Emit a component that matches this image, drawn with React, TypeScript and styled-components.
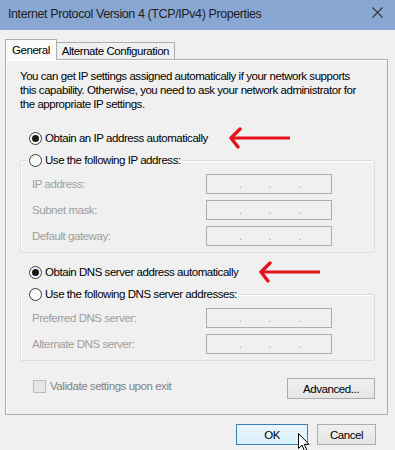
import React from 'react';
import styled, { createGlobalStyle } from 'styled-components';

const GlobalStyle = createGlobalStyle`
  html, body {
    margin: 0;
    padding: 0;
    background: #f0f0f0;
  }
  body {
    font-family: 'Liberation Sans', Arial, sans-serif;
  }
`;

const Window = styled.div`
  width: 395px;
  height: 450px;
  display: flex;
  flex-direction: column;
  background: #f0f0f0;
  overflow: hidden;
  font-family: 'Liberation Sans', Arial, sans-serif;
  font-size: 11.5px;
  letter-spacing: -0.45px;
  color: #000;
`;

const TitleBar = styled.div`
  height: 28px;
  flex-shrink: 0;
  display: flex;
  align-items: center;
  justify-content: space-between;
  padding: 0 6px 2px 8px;
  background: #89a7d3;
  font-size: 12.5px;
  letter-spacing: -0.4px;
  color: #1d1d1d;
`;

const CloseIcon = styled.svg`
  width: 11px;
  height: 11px;
  margin-right: 6px;
  margin-bottom: 4px;
`;

const Body = styled.div`
  display: flex;
  flex-direction: column;
  padding: 8px 7px 0 5px;
`;

const TabStrip = styled.div`
  display: flex;
  align-items: flex-end;
  height: 21px;
`;

const Tab = styled.div<{ $active?: boolean }>`
  height: ${(p) => (p.$active ? '21px' : '17px')};
  padding: 0 ${(p) => (p.$active ? '6px' : '5px')};
  display: flex;
  align-items: center;
  border: 1px solid #adadad;
  border-bottom: none;
  border-left: ${(p) => (p.$active ? '1px solid #adadad' : 'none')};
  background: ${(p) => (p.$active ? '#fbfbfb' : '#f0f0f0')};
  box-sizing: border-box;
  position: relative;
  top: ${(p) => (p.$active ? '1px' : '0')};
  z-index: ${(p) => (p.$active ? 1 : 0)};
`;

const Panel = styled.div`
  height: 356px;
  box-sizing: border-box;
  border: 1px solid #adadad;
  background: #f0f0f0;
  box-shadow: inset 1px 1px 0 #fff;
  padding: 9px 12px 0 14px;
  display: flex;
  flex-direction: column;
`;

const Intro = styled.p`
  margin: 0;
  line-height: 14px;
  white-space: nowrap;
`;

const RadioRow = styled.label<{ $top?: number; $left?: number }>`
  display: flex;
  align-items: center;
  height: 16px;
  margin: ${(p) => `${p.$top ?? 0}px 0 0 ${p.$left ?? 9}px`};
`;

const RadioCircle = styled.span<{ $checked?: boolean }>`
  width: 13px;
  height: 13px;
  box-sizing: border-box;
  border-radius: 50%;
  border: 1px solid #3c3c3c;
  background: linear-gradient(#f4f4f4, #fff);
  display: flex;
  align-items: center;
  justify-content: center;
  margin-right: 3px;
  flex-shrink: 0;

  &::after {
    content: '';
    width: 7px;
    height: 7px;
    border-radius: 50%;
    background: ${(p) => (p.$checked ? '#1a1a1a' : 'transparent')};
  }
`;

const Arrow = styled.svg`
  width: 64px;
  height: 22px;
  margin-left: 20px;
  flex-shrink: 0;
`;

const Group = styled.fieldset<{ $top: number }>`
  margin: ${(p) => `${p.$top}px 0 0 0`};
  padding: 0 0 6px 7px;
  border: 1px solid #dcdcdc;
  border-radius: 2px;
  box-shadow: 1px 1px 0 #fff inset;
  min-width: 0;
`;

const Legend = styled.legend`
  padding: 0 1px 0 1px;
  margin-left: 0;
`;

const FieldRow = styled.div`
  display: flex;
  align-items: center;
  justify-content: space-between;
  height: 20px;
  margin-top: 6px;
  padding-left: 4px;
  padding-right: 42px;
`;

const FieldLabel = styled.span`
  color: #9e9e9e;
`;

const IpBox = styled.div`
  width: 126px;
  height: 20px;
  box-sizing: border-box;
  border: 1px solid #adadad;
  background: #f0f0f0;
  display: flex;
  align-items: center;
  padding-left: 32px;
  gap: 27px;
`;

const Dot = styled.span`
  color: #9e9e9e;
  font-size: 11px;
  line-height: 1;
`;

const BottomRow = styled.div`
  display: flex;
  align-items: flex-start;
  justify-content: space-between;
  margin-top: 17px;
`;

const CheckRow = styled.label`
  display: flex;
  align-items: center;
  margin-left: 13px;
  color: #838383;
  height: 16px;
`;

const CheckBox = styled.span`
  width: 13px;
  height: 13px;
  box-sizing: border-box;
  border: 1px solid #bcbcbc;
  background: #e6e6e6;
  margin-right: 4px;
`;

const Button = styled.button<{ $focus?: boolean; $w: number }>`
  width: ${(p) => p.$w}px;
  height: 21px;
  padding: 0;
  box-sizing: border-box;
  border: 1px solid ${(p) => (p.$focus ? '#3c7fb1' : '#acacac')};
  background: ${(p) =>
    p.$focus ? 'linear-gradient(#eaf6fd, #d9f0fc)' : 'linear-gradient(#f0f0f0, #e5e5e5)'};
  font-family: 'Liberation Sans', Arial, sans-serif;
  font-size: 11.5px;
  letter-spacing: -0.45px;
  color: #000;
  position: relative;
`;

const Footer = styled.div`
  display: flex;
  justify-content: flex-end;
  gap: 9px;
  padding: 9px 19px 0 0;
`;

const Cursor = styled.svg`
  position: absolute;
  left: 61px;
  top: 8px;
  width: 12px;
  height: 19px;
`;

const RedArrow = () => (
  <Arrow viewBox="0 0 64 22">
    <path d="M4 11 H62" stroke="#e3121c" strokeWidth="3" fill="none" />
    <path d="M12 2 L3 11 L10 20" stroke="#e3121c" strokeWidth="3.4" fill="none" strokeLinejoin="round" strokeLinecap="round" />
  </Arrow>
);

const IpField = () => (
  <IpBox>
    <Dot>.</Dot>
    <Dot>.</Dot>
    <Dot>.</Dot>
  </IpBox>
);

export default function App() {
  return (
    <Window>
      <GlobalStyle />
      <TitleBar>
        <span>Internet Protocol Version 4 (TCP/IPv4) Properties</span>
        <CloseIcon viewBox="0 0 11 11">
          <path d="M0.5 0.5 L10.5 10.5 M10.5 0.5 L0.5 10.5" stroke="#3a3a3a" strokeWidth="1.2" />
        </CloseIcon>
      </TitleBar>
      <Body>
        <TabStrip>
          <Tab $active>General</Tab>
          <Tab>Alternate Configuration</Tab>
        </TabStrip>
        <Panel>
          <Intro>
            You can get IP settings assigned automatically if your network supports
            <br />
            this capability. Otherwise, you need to ask your network administrator for
            <br />
            the appropriate IP settings.
          </Intro>

          <RadioRow $top={19}>
            <RadioCircle $checked />
            Obtain an IP address automatically
            <RedArrow />
          </RadioRow>

          <Group $top={6}>
            <Legend>
              <RadioRow $left={0}>
                <RadioCircle />
                Use the following IP address:
              </RadioRow>
            </Legend>
            <FieldRow>
              <FieldLabel>IP address:</FieldLabel>
              <IpField />
            </FieldRow>
            <FieldRow>
              <FieldLabel>Subnet mask:</FieldLabel>
              <IpField />
            </FieldRow>
            <FieldRow>
              <FieldLabel>Default gateway:</FieldLabel>
              <IpField />
            </FieldRow>
          </Group>

          <RadioRow $top={11}>
            <RadioCircle $checked />
            Obtain DNS server address automatically
            <RedArrow />
          </RadioRow>

          <Group $top={6}>
            <Legend>
              <RadioRow $left={0}>
                <RadioCircle />
                Use the following DNS server addresses:
              </RadioRow>
            </Legend>
            <FieldRow>
              <FieldLabel>Preferred DNS server:</FieldLabel>
              <IpField />
            </FieldRow>
            <FieldRow>
              <FieldLabel>Alternate DNS server:</FieldLabel>
              <IpField />
            </FieldRow>
          </Group>

          <BottomRow>
            <CheckRow>
              <CheckBox />
              Validate settings upon exit
            </CheckRow>
            <Button $w={88}>Advanced...</Button>
          </BottomRow>
        </Panel>
      </Body>
      <Footer>
        <Button $w={72} $focus>
          OK
          <Cursor viewBox="0 0 12 19">
            <path
              d="M0.5 0.5 L0.5 15.5 L4 12 L6.5 18 L8.8 17 L6.3 11.3 L11 11.3 Z"
              fill="#fff"
              stroke="#000"
              strokeWidth="1"
              strokeLinejoin="round"
            />
          </Cursor>
        </Button>
        <Button $w={59}>Cancel</Button>
      </Footer>
    </Window>
  );
}
